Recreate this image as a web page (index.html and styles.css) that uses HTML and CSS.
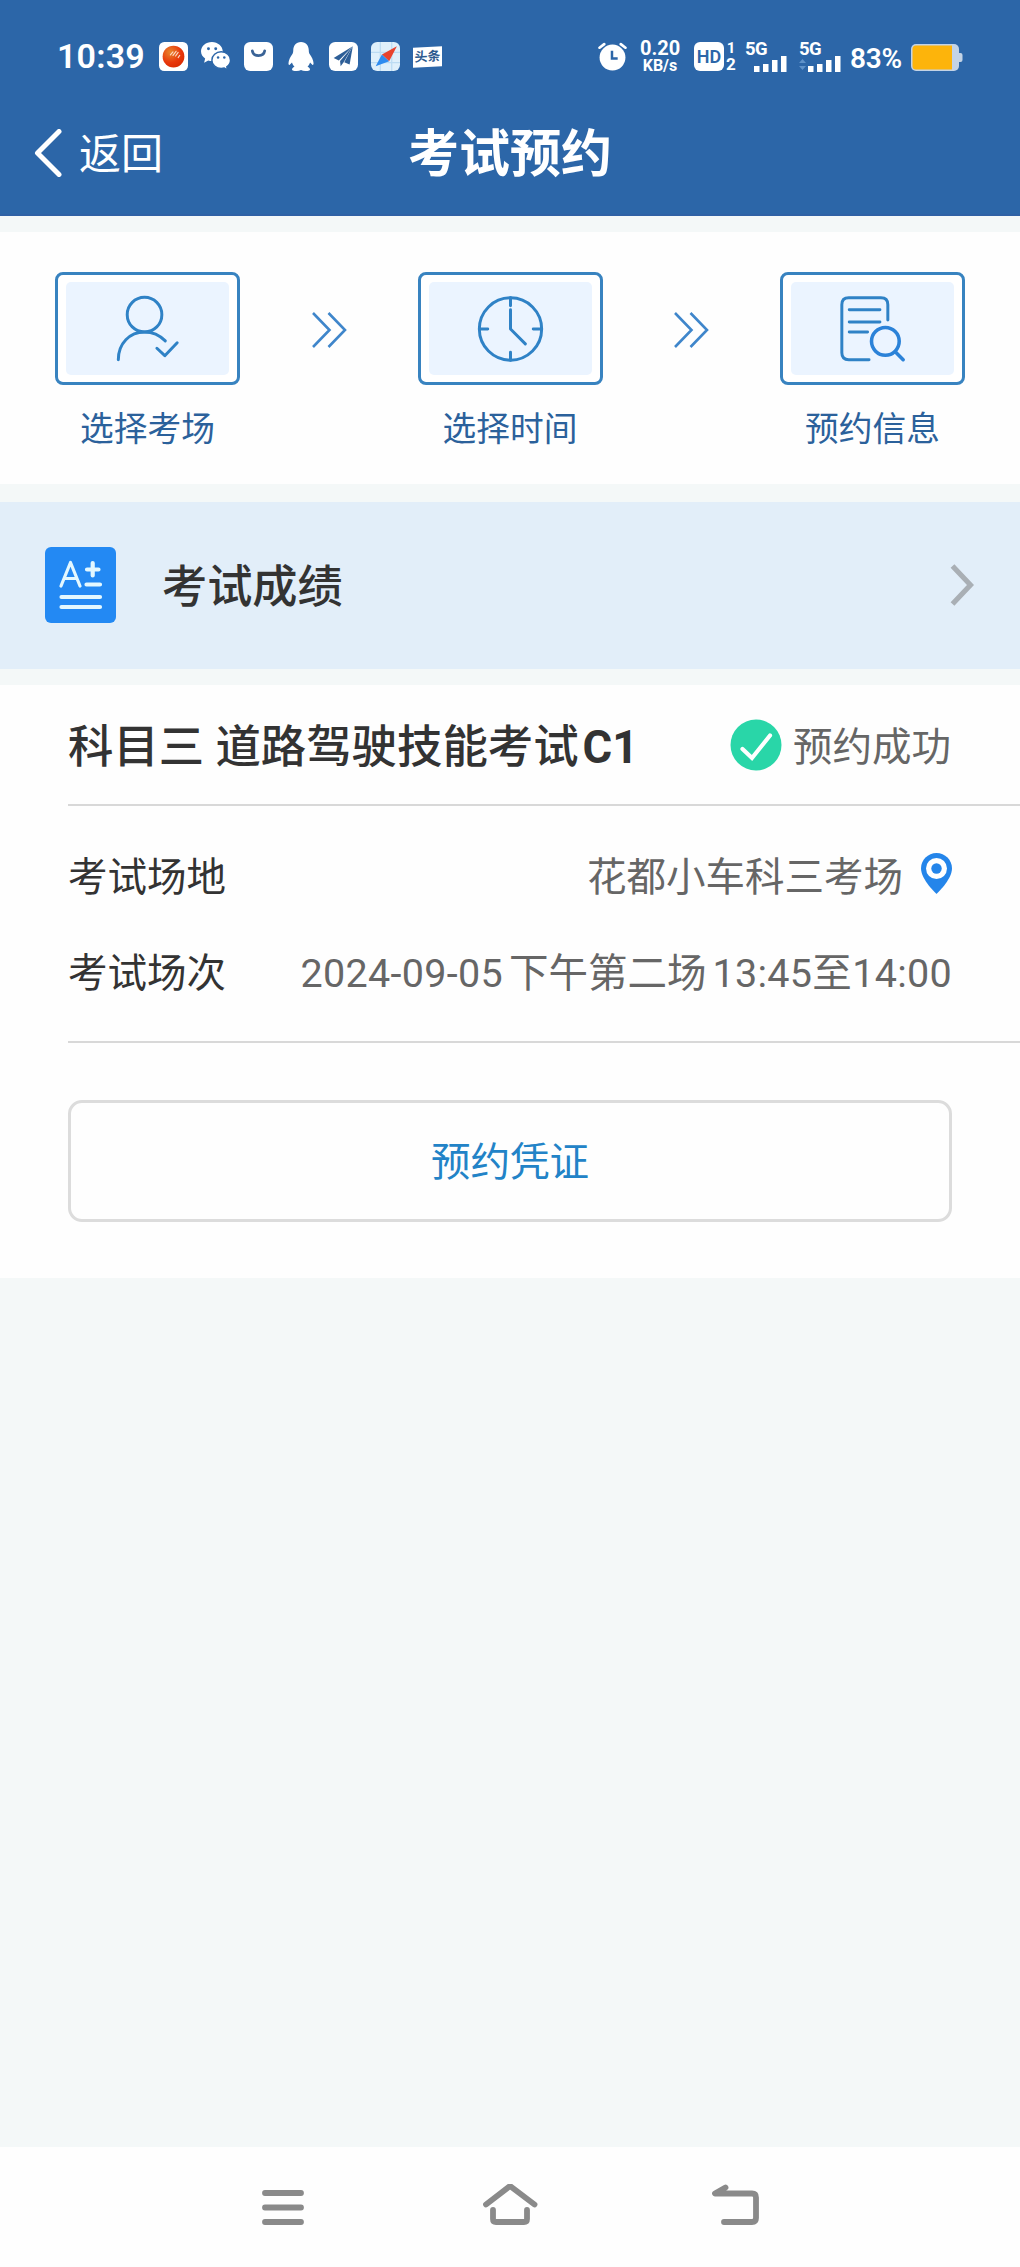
FILE: index.html
```html
<!DOCTYPE html>
<html lang="zh-CN">
<head>
    <meta charset="UTF-8">
    <meta name="viewport" content="width=device-width, initial-scale=1.0">
    <title>考试预约</title>
    <link rel="stylesheet" href="styles.css">
</head>
<body>
    <header class="top">
        <div class="status-bar">
            <div class="status-left">
                <span class="time">10:39</span>
                <svg class="app-icon" viewBox="0 0 28 28">
                    <defs>
                        <radialGradient id="ball" cx="0.35" cy="0.3" r="0.8">
                            <stop offset="0" stop-color="#e8862c"/>
                            <stop offset="0.6" stop-color="#e8380c"/>
                            <stop offset="1" stop-color="#d82a00"/>
                        </radialGradient>
                    </defs>
                    <rect width="28" height="28" rx="5" fill="#fff"/>
                    <circle cx="14" cy="14" r="10.5" fill="url(#ball)"/>
                    <path d="M11 12.500l2.500-3M13.500 13l3-4M16 13.500l2.500-3.500M18.500 15l1.500-2" stroke="#fbd9c4" stroke-width="1.100" stroke-linecap="round"/>
                </svg>
                <svg class="app-icon" viewBox="0 0 28 28">
                    <path d="M10.500 0C4.700 0 0 4 0 9c0 3 1.600 5.300 4 7l-1 4 4-2.200c1.100.3 2.300.5 3.500.5C16.300 18.300 21 14.200 21 9.200S16.300 0 10.500 0z" fill="#fff"/>
                    <path d="M19.500 9.500c-5 0-9 3.500-9 8s4 8 9 8c1 0 2-.1 3-.4l3.200 2-.8-3.200c2.100-1.500 3.600-3.700 3.600-6.400 0-4.500-4-8-9-8z" fill="#fff" stroke="#2c66a8" stroke-width="1.400"/>
                    <circle cx="7.200" cy="6.500" r="1.400" fill="#2c66a8"/>
                    <circle cx="14.200" cy="6.500" r="1.400" fill="#2c66a8"/>
                    <circle cx="16.500" cy="15" r="1.200" fill="#2c66a8"/>
                    <circle cx="22.500" cy="15" r="1.200" fill="#2c66a8"/>
                </svg>
                <svg class="app-icon" viewBox="0 0 28 28">
                    <rect width="28" height="28" rx="6" fill="#fff"/>
                    <path d="M8 8.500c1 6.200 11 6.200 12 0" fill="none" stroke="#3a6396" stroke-width="2.600" stroke-linecap="round"/>
                </svg>
                <svg class="app-icon" viewBox="0 0 28 28">
                    <path d="M14.500 0C9.500 0 7 3.800 7 8c0 1.500-.2 2.500-.8 3.600C4.200 14.500 2.500 17.500 2.400 20.500c0 1.400.5 2 1.200 1.500l2.200-2.200c.5 1.600 1.200 2.900 2.400 4-1.500.7-2.400 1.500-2.400 2.600 0 1.300 2 1.800 4.500 1.600 1.700-.1 3-.5 4.200-1 1.200.5 2.500.9 4.200 1 2.500.2 4.500-.3 4.500-1.600 0-1.100-.9-1.900-2.400-2.600 1.200-1.100 1.900-2.400 2.400-4l2.200 2.200c.7.500 1.200-.1 1.200-1.500-.1-3-1.800-6-3.800-8.900C22.200 10.500 22 9.500 22 8c0-4.200-2.500-8-7.500-8z" fill="#fff"/>
                </svg>
                <svg class="app-icon" viewBox="0 0 28 28">
                    <rect width="28" height="28" rx="6" fill="#fff"/>
                    <path d="M23 4L4.500 15.500l5 2.300z" fill="#2d5e97"/>
                    <path d="M23 4L10.700 18.300l.5 5.200 2.800-3.800z" fill="#2d5e97"/>
                    <path d="M23 4l-8.300 15.500 5.200 2.300z" fill="#2d5e97"/>
                </svg>
                <svg class="app-icon" viewBox="0 0 28 28">
                    <rect width="28" height="28" rx="6" fill="#dff0fb"/>
                    <path d="M9 0v28M20 0v28M0 10h28M0 20h28" stroke="#bcdcf3" stroke-width="1.200"/>
                    <path d="M25 4L10.500 12l7 6.500z" fill="#e8432e"/>
                    <path d="M10.500 12L4.500 23.500l13-5z" fill="#2e8cf0"/>
                </svg>
                <span class="toutiao">头条</span>
            </div>
            <div class="status-right">
                <svg class="alarm" viewBox="0 0 28 28">
                    <circle cx="14" cy="15" r="12.500" fill="#fff"/>
                    <path d="M1.500 5.500L6 2M26.500 5.500L22 2" stroke="#fff" stroke-width="2.600" stroke-linecap="round"/>
                    <path d="M13.500 8.500V16h5.500" fill="none" stroke="#2c66a8" stroke-width="2.400"/>
                </svg>
                <div class="speed">
                    <span class="speed-num">0.20</span>
                    <span class="speed-unit">KB/s</span>
                </div>
                <span class="hd">HD</span>
                <div class="sims"><span class="sim-one">1</span><span>2</span></div>
                <div class="signal">
                    <span>5G</span>
                    <svg viewBox="0 0 42 17"><path d="M9 11h5.500v6H9zM18 9h5.500v8H18zM27 5h5.500v12H27zM36 1h5.500v16H36z" fill="#fff"/></svg>
                </div>
                <div class="signal signal-second">
                    <span>5G</span>
                    <svg viewBox="0 0 42 17">
                        <path d="M0 8l3.500-4L7 8zM0 11l3.500 4L7 11z" fill="#5f92c9"/>
                        <path d="M9 11h5.500v6H9zM18 9h5.500v8H18zM27 5h5.500v12H27zM36 1h5.500v16H36z" fill="#fff"/>
                    </svg>
                </div>
                <span class="percent">83%</span>
                <svg class="battery" viewBox="0 0 52 28">
                    <rect x="0" y="0" width="48" height="27" rx="5" fill="#c3d3e6"/>
                    <path d="M48 9h1.500q2 0 2 2v5q0 2-2 2H48z" fill="#c3d3e6"/>
                    <path d="M5 1.500h36v24H5q-3.500 0-3.500-3.500V5Q1.500 1.500 5 1.500z" fill="#fdb40b"/>
                </svg>
            </div>
        </div>
        <nav class="nav-bar">
            <a class="back">
                <svg viewBox="0 0 28 48"><path d="M25 2.500L3.500 24 25 45.500" fill="none" stroke="#fff" stroke-width="5" stroke-linecap="round" stroke-linejoin="round"/></svg>
                <span>返回</span>
            </a>
            <h1>考试预约</h1>
        </nav>
    </header>

    <section class="steps">
        <div class="step">
            <div class="step-box">
                <svg viewBox="0 0 164 94">
                    <circle cx="79" cy="33" r="17.500"/>
                    <path d="M52.500 78.500C52.500 62 64 50.500 79 50.500c8 0 15.500 3.500 21 9M91.500 67l8 7.500L112 61.500"/>
                </svg>
            </div>
            <span>选择考场</span>
        </div>
        <svg class="arrows" viewBox="0 0 36 36"><path d="M2 1l16.500 17L2 35M17.500 1L34 18 17.500 35"/></svg>
        <div class="step">
            <div class="step-box">
                <svg viewBox="0 0 164 94">
                    <circle cx="82" cy="47.500" r="31.500"/>
                    <path d="M82 16v8M82 71v8M50.500 47.500H59M105 47.500h8.500M82 28v19.500l15 15"/>
                </svg>
            </div>
            <span>选择时间</span>
        </div>
        <svg class="arrows" viewBox="0 0 36 36"><path d="M2 1l16.500 17L2 35M17.500 1L34 18 17.500 35"/></svg>
        <div class="step">
            <div class="step-box">
                <svg viewBox="0 0 164 94">
                    <path d="M97.500 38.500V23q0-7-7-7H58q-7 0-7 7v48.500q0 7 7 7h20.500M58.500 28h31M58.500 40.500h31M58.500 50.500H77"/>
                    <circle class="lens" cx="95" cy="60" r="14"/>
                    <path class="lens" d="M105 70.500l8 8"/>
                </svg>
            </div>
            <span>预约信息</span>
        </div>
    </section>

    <section class="score">
        <svg class="score-icon" viewBox="0 0 71 76">
            <rect width="71" height="76" rx="6" fill="#2389f3"/>
            <g fill="none" stroke="#e3f8ff" stroke-linecap="round" stroke-linejoin="round">
                <path d="M16 39L25.500 15.500 35 39M19.500 31.500h12" stroke-width="3.200"/>
                <path d="M42 22.500h11.500M47.700 16v12.500M41.500 37.500h13.500M16.500 50h38.500M16.500 60h38.500" stroke-width="4.200"/>
            </g>
        </svg>
        <h2>考试成绩</h2>
        <svg class="more" viewBox="0 0 24 42"><path d="M2.500 2l18 19-18 19" fill="none" stroke="#a9afb5" stroke-width="5.200"/></svg>
    </section>

    <section class="exam">
        <div class="exam-head">
            <h2>科目三 道路驾驶技能考试<span class="latin">C1</span></h2>
            <div class="result">
                <svg viewBox="0 0 52 52">
                    <circle cx="26" cy="26" r="25.500" fill="#29d6a8"/>
                    <path d="M12.500 30l9.500 9 18-22.500" fill="none" stroke="#fff" stroke-width="4.200" stroke-linecap="round"/>
                </svg>
                <span>预约成功</span>
            </div>
        </div>
        <div class="exam-info">
            <div class="row">
                <span class="label">考试场地</span>
                <span class="value">花都小车科三考场</span>
                <svg class="pin" viewBox="0 0 31 41">
                    <path d="M15.500 0C6.900 0 0 6.900 0 15.500 0 26.500 15.500 41 15.500 41S31 26.500 31 15.500C31 6.900 24.100 0 15.500 0z" fill="#2485ea"/>
                    <circle cx="15.500" cy="15.500" r="10.500" fill="#fff"/>
                    <circle cx="15.500" cy="15.500" r="5.200" fill="#2485ea"/>
                </svg>
            </div>
            <div class="row">
                <span class="label">考试场次</span>
                <span class="value date">2024-09-05<span class="session">下午第二场</span>13:45至14:00</span>
            </div>
        </div>
        <button class="voucher">预约凭证</button>
    </section>

    <footer class="system-nav">
        <svg viewBox="0 0 60 44"><path d="M12 9h36M12 23.500h36M12 38h36"/></svg>
        <svg viewBox="0 0 60 44"><path d="M6 20.500L30 2l24.500 18.500M13 26v9q0 3 3 3h28q3 0 3-3v-9"/></svg>
        <svg viewBox="0 0 60 44"><path d="M18.500 3.500L8 9.500h37q4 0 4 4V34q0 4-4 4H17"/></svg>
    </footer>
</body>
</html>
```
FILE: styles.css
```css
* {
    box-sizing: border-box;
}

body {
    margin: 0;
    min-height: 2267px;
    display: flex;
    flex-direction: column;
    background: #f4f8f8;
    font-family: Roboto, "Noto Sans CJK SC", sans-serif;
    color: #333;
}

h1, h2 {
    margin: 0;
    font-weight: 500;
}

svg {
    display: block;
    flex: none;
}

.top {
    height: 216px;
    background: #2c66a8;
    border-bottom: 2px solid #2f61a5;
    color: #fff;
}

/* status bar */
.status-bar {
    display: flex;
    justify-content: space-between;
    height: 100px;
    padding: 42px 57px 0 57px;
}

.status-left, .status-right {
    display: flex;
    height: 29px;
    align-items: center;
}

.time {
    width: 102px;
    margin-top: -2px;
    font-size: 34px;
    font-weight: 600;
    letter-spacing: 0.2px;
}

.app-icon {
    width: 29px;
    height: 29px;
    margin-right: 13.400px;
}

.toutiao {
    width: 29px;
    height: 20px;
    background: #fff;
    color: #2d5b8f;
    font-size: 13px;
    font-weight: 700;
    line-height: 19px;
    text-align: center;
    transform: skewY(-3deg);
}

.alarm {
    width: 29px;
    height: 29px;
    margin-right: 13px;
}

.speed {
    display: flex;
    flex-direction: column;
    width: 40px;
    margin-right: 14px;
    font-weight: 700;
    text-align: center;
}

.speed-num {
    font-size: 20px;
    line-height: 18px;
}

.speed-unit {
    font-size: 16px;
    line-height: 17px;
}

.hd {
    width: 30px;
    height: 29px;
    border-radius: 6px;
    background: #fff;
    color: #2c66a8;
    font-size: 18px;
    font-weight: 600;
    line-height: 29px;
    text-align: center;
}

.sims {
    display: flex;
    flex-direction: column;
    width: 12px;
    margin: 0 8px 0 1px;
    font-size: 17px;
    font-weight: 700;
    line-height: 16px;
    text-align: center;
}

.sim-one {
    font-size: 15px;
    line-height: 15px;
}

.signal {
    width: 42px;
    margin-right: 12px;
    font-size: 18.500px;
    font-weight: 700;
    line-height: 14px;
}

.signal span {
    display: block;
    letter-spacing: -0.5px;
}

.signal svg {
    width: 42px;
    height: 17px;
    margin-top: -1px;
}

.signal-second {
    margin-right: 9px;
}

.percent {
    width: 61px;
    font-size: 28px;
    font-weight: 600;
    letter-spacing: -0.2px;
    padding-top: 3px;
}

.battery {
    width: 52px;
    height: 28px;
    margin-top: 3px;
}

/* title bar */
.nav-bar {
    display: grid;
    grid-template-columns: 1fr auto 1fr;
    align-items: center;
    height: 106px;
    padding: 0 34px;
}

.back {
    display: flex;
    align-items: center;
    gap: 17px;
    font-size: 42px;
}

.back svg {
    width: 28px;
    height: 48px;
}

.back span {
    padding-bottom: 5px;
}

.nav-bar h1 {
    padding-top: 3px;
    font-size: 51px;
    font-weight: 700;
    line-height: 60px;
}

/* steps */
.steps {
    display: flex;
    justify-content: space-between;
    height: 252px;
    margin-top: 16px;
    padding: 40px 55px 0;
    background: #fefefe;
}

.step {
    display: flex;
    flex-direction: column;
    align-items: center;
    width: 185px;
    color: #2b619b;
    font-size: 33.700px;
}

.step span {
    margin-top: 25px;
    line-height: 40px;
}

.step-box {
    width: 185px;
    height: 113px;
    padding: 7px 8px;
    border: 3px solid #3883c0;
    border-radius: 8px;
    background: #fff;
}

.step-box svg {
    width: 163px;
    height: 93px;
    border-radius: 5px;
    background: #ebf4ff;
    fill: none;
    stroke: #2f82c6;
    stroke-width: 3px;
    stroke-linecap: round;
    stroke-linejoin: round;
}

.step-box .lens {
    stroke: #2b82d8;
    stroke-width: 3.600px;
}

.arrows {
    width: 36px;
    height: 36px;
    margin-top: 40px;
    fill: none;
    stroke: #3f86cb;
    stroke-width: 2.600px;
}

/* score entry */
.score {
    display: flex;
    align-items: center;
    height: 167px;
    margin-top: 18px;
    padding: 0 46px 2px 45px;
    background: #e2eef9;
}

.score-icon {
    width: 71px;
    height: 76px;
}

.score h2 {
    flex: 1;
    margin-left: 46px;
    padding-bottom: 3px;
    font-size: 45.200px;
}

.more {
    width: 24px;
    height: 42px;
}

/* exam card */
.exam {
    height: 593px;
    margin-top: 16px;
    padding-left: 68px;
    background: #fefefe;
}

.exam-head {
    display: flex;
    justify-content: space-between;
    align-items: center;
    height: 121px;
    padding-right: 69px;
    border-bottom: 2px solid #d8d8d8;
}

.exam-head h2 {
    padding-bottom: 4px;
    font-size: 45.400px;
}

.latin {
    margin-left: 4px;
    font-weight: 700;
}

.result {
    display: flex;
    align-items: center;
    gap: 11px;
    color: #666;
    font-size: 39.500px;
}

.result svg {
    width: 52px;
    height: 52px;
}

.result span {
    padding-bottom: 3px;
}

.exam-info {
    height: 237px;
    padding: 19px 68px 0 0;
    border-bottom: 2px solid #d8d8d8;
}

.row {
    display: flex;
    align-items: center;
    height: 96px;
    font-size: 39.500px;
}

.value {
    margin-left: auto;
    color: #666;
}

.date {
    letter-spacing: 0.300px;
}

.session {
    margin: 0 6px;
    letter-spacing: 0;
}

.pin {
    width: 31px;
    height: 41px;
    margin-left: 18px;
}

.voucher {
    display: block;
    width: 884px;
    height: 122px;
    margin-top: 57px;
    padding-bottom: 7px;
    border: 3px solid #dcdcdc;
    border-radius: 14px;
    background: #fefefe;
    color: #2283c7;
    font-family: inherit;
    font-size: 39.500px;
}

/* system navigation */
.system-nav {
    display: flex;
    justify-content: center;
    gap: 167px;
    height: 120px;
    margin-top: auto;
    padding-top: 37px;
    background: #fefefe;
}

.system-nav svg {
    width: 60px;
    height: 44px;
    fill: none;
    stroke: #8a8a8a;
    stroke-width: 5.800px;
    stroke-linecap: round;
    stroke-linejoin: round;
}
```
